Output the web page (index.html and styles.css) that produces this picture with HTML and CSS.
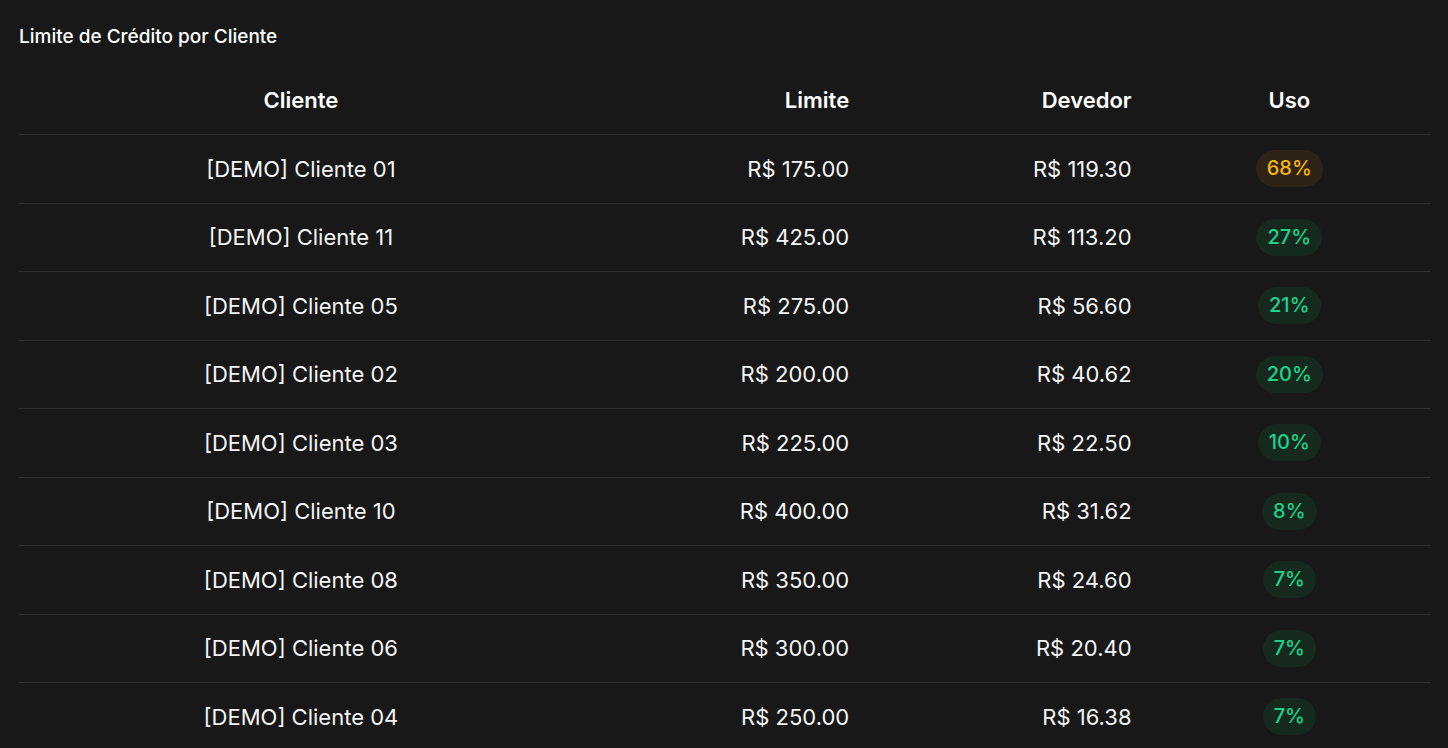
FILE: index.html
```html
<!DOCTYPE html>
<html lang="pt-BR">
<head>
<meta charset="utf-8">
<title>Limite de Crédito por Cliente</title>
<link rel="stylesheet" href="styles.css">
</head>
<body>
<section class="card">
  <h2 class="card-title">Limite de Crédito por Cliente</h2>
  <table class="credit-table">
    <colgroup>
      <col class="c-client"><col class="c-num"><col class="c-num"><col class="c-num">
    </colgroup>
    <thead>
      <tr>
        <th class="center">Cliente</th>
        <th class="right">Limite</th>
        <th class="right">Devedor</th>
        <th class="center">Uso</th>
      </tr>
    </thead>
    <tbody>
      <tr><td class="center">[DEMO] Cliente 01</td><td class="right">R$ 175.00</td><td class="right">R$ 119.30</td><td class="center"><span class="pill warn">68%</span></td></tr>
      <tr><td class="center">[DEMO] Cliente 11</td><td class="right">R$ 425.00</td><td class="right">R$ 113.20</td><td class="center"><span class="pill ok">27%</span></td></tr>
      <tr><td class="center">[DEMO] Cliente 05</td><td class="right">R$ 275.00</td><td class="right">R$ 56.60</td><td class="center"><span class="pill ok">21%</span></td></tr>
      <tr><td class="center">[DEMO] Cliente 02</td><td class="right">R$ 200.00</td><td class="right">R$ 40.62</td><td class="center"><span class="pill ok">20%</span></td></tr>
      <tr><td class="center">[DEMO] Cliente 03</td><td class="right">R$ 225.00</td><td class="right">R$ 22.50</td><td class="center"><span class="pill ok">10%</span></td></tr>
      <tr><td class="center">[DEMO] Cliente 10</td><td class="right">R$ 400.00</td><td class="right">R$ 31.62</td><td class="center"><span class="pill ok">8%</span></td></tr>
      <tr><td class="center">[DEMO] Cliente 08</td><td class="right">R$ 350.00</td><td class="right">R$ 24.60</td><td class="center"><span class="pill ok">7%</span></td></tr>
      <tr><td class="center">[DEMO] Cliente 06</td><td class="right">R$ 300.00</td><td class="right">R$ 20.40</td><td class="center"><span class="pill ok">7%</span></td></tr>
      <tr><td class="center">[DEMO] Cliente 04</td><td class="right">R$ 250.00</td><td class="right">R$ 16.38</td><td class="center"><span class="pill ok">7%</span></td></tr>
    </tbody>
  </table>
</section>
</body>
</html>
```
FILE: styles.css
```css
html, body {
  margin: 0;
  padding: 0;
  background: #181818;
  color: #ffffff;
  font-family: Inter, "Noto Sans", sans-serif;
}
.card {
  padding: 25px 17px 0 19px;
}
.card-title {
  margin: 0;
  font-size: 19px;
  font-weight: 500;
  line-height: 24px;
  color: #ffffff;
}
.credit-table {
  width: 100%;
  border-collapse: collapse;
  table-layout: fixed;
  margin-top: 17px;
}
.c-client { width: 40%; }
.c-num { width: 20%; }
.credit-table th {
  font-size: 22px;
  font-weight: 600;
  height: 68px;
  padding: 0 17px 0 16px;
  border-bottom: 1px solid #2e2e2e;
}
.credit-table td {
  font-size: 22px;
  font-weight: 400;
  height: 67.5px;
  padding: 0 17px 0 16px;
  border-bottom: 1px solid #2e2e2e;
  color: #f4f4f4;
}
.center { text-align: center; }
.right { text-align: right; }
.pill {
  display: inline-block;
  padding: 0 11px;
  height: 37px;
  line-height: 37px;
  border-radius: 19px;
  font-size: 20px;
  font-weight: 500;
}
.pill.warn { background: #2d2417; color: #f7b50f; }
.pill.ok { background: #15291f; color: #1ed28a; }
```
